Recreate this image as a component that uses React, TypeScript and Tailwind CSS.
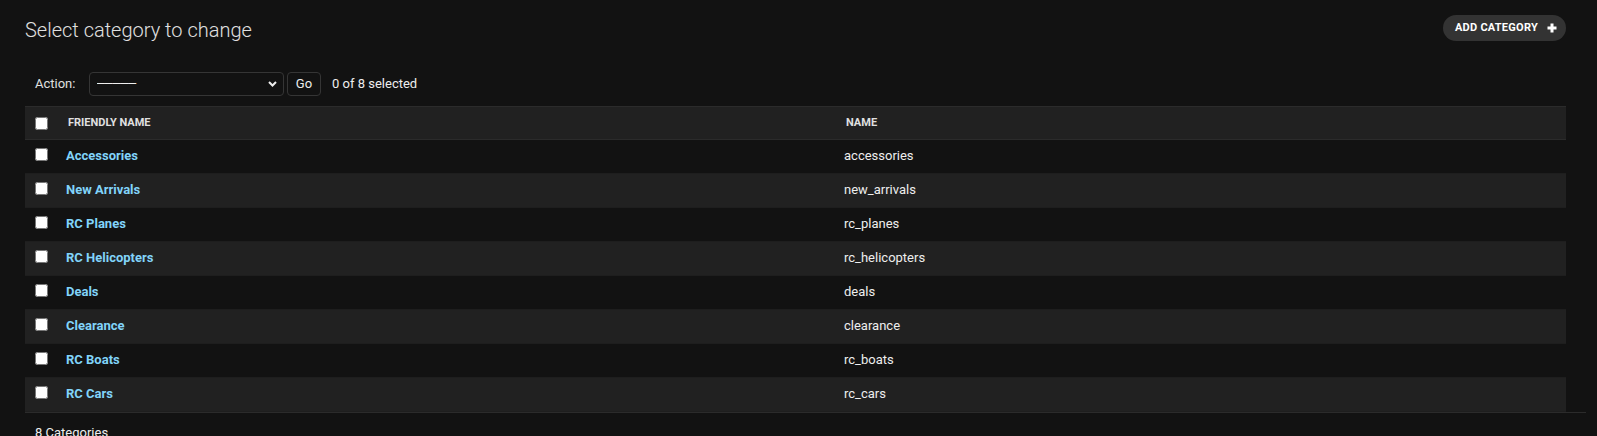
import React from "react";

const rows: [string, string][] = [
  ["Accessories", "accessories"],
  ["New Arrivals", "new_arrivals"],
  ["RC Planes", "rc_planes"],
  ["RC Helicopters", "rc_helicopters"],
  ["Deals", "deals"],
  ["Clearance", "clearance"],
  ["RC Boats", "rc_boats"],
  ["RC Cars", "rc_cars"],
];

export default function App() {
  return (
    <div className="min-h-screen bg-[#121212] text-[#eeeeee] font-['Roboto',sans-serif] pl-[25px] pr-[11px] pt-[15px]">
      <div className="flex items-start justify-between pr-[20px]">
        <h1 className="mt-[3px] text-[20px] leading-[24px] font-light text-[#e0e0e0]">
          Select category to change
        </h1>
        <a className="flex items-center h-[26px] rounded-full bg-[#333333] pl-[12px] pr-[9px] text-[11px] font-bold uppercase tracking-[0.25px] text-white cursor-pointer">
          Add category
          <svg width="10" height="10" viewBox="0 0 10 10" className="ml-[9px]">
            <path d="M5 0.5V9.5M0.5 5H9.5" stroke="#ffffff" strokeWidth="3" />
          </svg>
        </a>
      </div>

      <div className="mr-[20px]">
        <div className="mt-[20px] flex items-center h-[44px] px-[10px] text-[13px] leading-[16px] text-[#e0e0e0]">
          <label className="w-[54px]">Action:</label>
          <div className="relative w-[195px] h-[24px]">
            <select className="appearance-none w-full h-full rounded-[4px] border border-[#353535] bg-[#121212] pl-[7px] text-[13px] text-[#eeeeee] outline-none font-['Roboto','DejaVu_Sans',sans-serif]">
              <option>─────</option>
            </select>
            <svg
              width="9"
              height="6"
              viewBox="0 0 9 6"
              className="absolute right-[7px] top-[9px] pointer-events-none"
            >
              <path d="M1 1L4.5 4.5L8 1" stroke="#eeeeee" strokeWidth="2" fill="none" />
            </svg>
          </div>
          <button className="ml-[3px] w-[34px] h-[24px] rounded-[4px] border border-[#353535] bg-[#121212] text-[13px] text-[#eeeeee]">
            Go
          </button>
          <span className="ml-[11px] text-[#eeeeee]">0 of 8 selected</span>
        </div>

        <div className="grid grid-cols-[32px_779px_1fr] h-[34px] bg-[#212121] border-y border-[#2b2b2b] items-center text-[11px] leading-[16px] font-bold uppercase text-[#e0e0e0]">
          <div className="pl-[10px] flex items-center">
            <input type="checkbox" className="m-0 w-[13px] h-[13px]" />
          </div>
          <div className="pl-[11px]">Friendly name</div>
          <div className="pl-[10px]">Name</div>
        </div>

        {rows.map(([friendly, name], i) => (
          <div
            key={name}
            className={
              "grid grid-cols-[32px_779px_1fr] h-[34px] border-b border-[#1e1e1e] text-[13px] leading-[16px] " +
              (i % 2 === 1 ? "bg-[#212121]" : "bg-[#121212]")
            }
          >
            <div className="pl-[10px] pt-[8px]">
              <input type="checkbox" className="m-0 w-[13px] h-[13px] block" />
            </div>
            <div className="pl-[9px] pt-[8px]">
              <a className="font-bold text-[#81d4fa] cursor-pointer">{friendly}</a>
            </div>
            <div className="pl-[8px] pt-[8px] text-[#eeeeee]">{name}</div>
          </div>
        ))}
      </div>

      <div className="border-t border-[#2b2b2b] pt-[12px] pl-[10px] text-[13px] leading-[16px] text-[#eeeeee]">
        8 Categories
      </div>
    </div>
  );
}
